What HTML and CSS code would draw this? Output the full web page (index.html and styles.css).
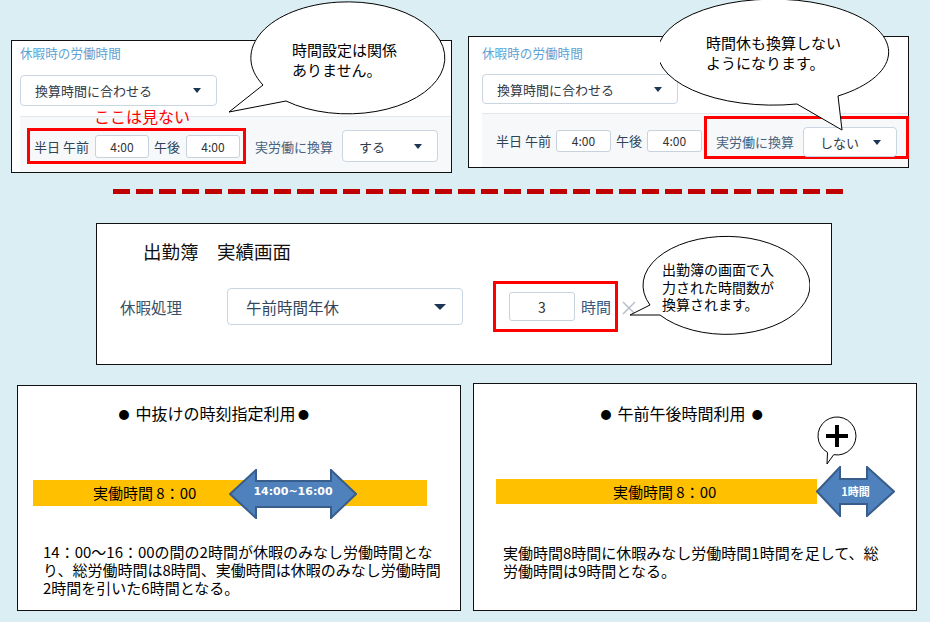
FILE: index.html
```html
<!DOCTYPE html>
<html lang="ja">
<head>
<meta charset="utf-8">
<title>休暇時の労働時間</title>
<link rel="stylesheet" href="styles.css">
</head>
<body>
  <div class="top-row">
    <section class="panel setting setting--a">
      <div class="setting__title">休暇時の労働時間</div>
      <div class="select setting__mode"><span>換算時間に合わせる</span><i class="caret"></i></div>
      <div class="setting__detail">
        <div class="mark mark--halfday">
          <span class="half-label">半日 午前</span>
          <span class="time">4:00</span>
          <span class="half-label half-label--pm">午後</span>
          <span class="time">4:00</span>
        </div>
        <span class="conv-label">実労働に換算</span>
        <div class="select conv-select"><span>する</span><i class="caret"></i></div>
      </div>
    </section>
    <section class="panel setting setting--b">
      <div class="setting__title">休暇時の労働時間</div>
      <div class="select setting__mode"><span>換算時間に合わせる</span><i class="caret"></i></div>
      <div class="setting__detail">
        <span class="half-label">半日 午前</span>
        <span class="time">4:00</span>
        <span class="half-label half-label--pm">午後</span>
        <span class="time">4:00</span>
        <div class="mark mark--conv">
          <span class="conv-label conv-label--in">実労働に換算</span>
          <div class="select conv-select conv-select--b"><span>しない</span><i class="caret"></i></div>
        </div>
      </div>
    </section>
  </div>

  <div class="divider"></div>

  <section class="panel record">
    <div class="record__title">出勤簿　実績画面</div>
    <div class="record__row">
      <span class="record__label">休暇処理</span>
      <div class="select record__select"><span>午前時間年休</span><i class="caret caret--lg"></i></div>
      <div class="mark mark--hours">
        <span class="hours-input">3</span>
        <span class="hours-unit">時間</span>
      </div>
      <svg class="clear-x" width="14" height="14" viewBox="0 0 14 14"><path d="M1 1 L13 13 M13 1 L1 13" stroke="#b3bcc6" stroke-width="1.4" fill="none"/></svg>
    </div>
  </section>

  <div class="bottom-row">
    <section class="panel case case--a">
      <div class="case__title"><span class="dot">●</span> 中抜けの時刻指定利用<span class="dot">●</span></div>
      <div class="bar bar--a">実働時間 8：00
        <div class="arrow arrow--a">
          <svg width="128" height="50" viewBox="-1 -1 128 50"><path d="M0,24 L26,0 L26,11 L101,11 L101,0 L126,24 L101,48 L101,37 L26,37 L26,48 Z" fill="#4f81bd" stroke="#385d8a" stroke-width="2" stroke-linejoin="miter"/></svg>
          <span class="arrow__label arrow__label--a">14:00~16:00</span>
        </div>
      </div>
      <p class="case__note case__note--a">14：00～16：00の間の2時間が休暇のみなし労働時間とな<br>り、総労働時間は8時間、実働時間は休暇のみなし労働時間<br>2時間を引いた6時間となる。</p>
    </section>
    <section class="panel case case--b">
      <div class="case__title"><span class="dot">●</span> 午前午後時間利用 <span class="dot">●</span></div>
      <div class="bar bar--b">実働時間 8：00
        <svg class="plus-bubble" width="42" height="52" viewBox="0 0 42 52"><path d="M11.5,37.45 L11,49 L17.7,39.7 A19,19 0 1 0 11.5,37.45 Z" fill="#fff" stroke="#000" stroke-width="1"/><path d="M10,21 H32 M21,10 V32" stroke="#000" stroke-width="4"/></svg>
        <div class="arrow arrow--b">
          <svg width="79" height="51" viewBox="-1 -1 79 51"><path d="M0,24.5 L23,0 L23,12 L50,12 L50,0 L77,24.5 L50,49 L50,37 L23,37 L23,49 Z" fill="#4f81bd" stroke="#385d8a" stroke-width="2"/></svg>
          <span class="arrow__label arrow__label--b">1時間</span>
        </div>
      </div>
      <p class="case__note case__note--b">実働時間8時間に休暇みなし労働時間1時間を足して、総<br>労働時間は9時間となる。</p>
    </section>
  </div>

  <div class="note-red">ここは見ない</div>

  <div class="bubble bubble--1">
    <svg width="226" height="118" viewBox="0 0 226 118"><path d="M38,85 L4,112 L61,101 A97,56 0 1 0 38,85 Z" fill="#fff" stroke="#000" stroke-width="1"/></svg>
    <p class="bubble__text bubble__text--1">時間設定は関係<br>ありません。</p>
  </div>
  <div class="bubble bubble--2">
    <svg width="236" height="138" viewBox="0 0 236 138"><path d="M137,108 L182,134 L178,100 A115.5,53 0 1 0 137,108 Z" fill="#fff" stroke="#000" stroke-width="1"/></svg>
    <p class="bubble__text bubble__text--2">時間休も換算しない<br>ようになります。</p>
  </div>
  <div class="bubble bubble--3">
    <svg width="182" height="104" viewBox="0 0 182 104"><path d="M22,72 L2,82 L32,82 A83.5,49 0 1 0 22,72 Z" fill="#fff" stroke="#000" stroke-width="1"/></svg>
    <p class="bubble__text bubble__text--3">出勤簿の画面で入<br>力された時間数が<br>換算されます。</p>
  </div>
</body>
</html>
```
FILE: styles.css
```css
* { box-sizing: border-box; }
html, body { margin: 0; padding: 0; }
body {
  width: 930px;
  height: 622px;
  background: #daeef3;
  font-family: "Noto Sans CJK JP", "Noto Sans", sans-serif;
  color: #000;
  position: relative;
  overflow: hidden;
}
p { margin: 0; }

.panel { background: #fff; border: 1px solid #111; }

/* top row */
.top-row { display: flex; align-items: flex-start; padding-left: 11px; }
.setting {
  width: 441px;
  padding-left: 8px;
  display: flex;
  flex-direction: column;
  align-items: flex-start;
}
.setting--a { margin-top: 40px; }
.setting--b { margin-top: 36px; margin-left: 16px; padding-left: 13px; }
.setting__title { font-size: 12.6px; line-height: 16px; color: #5ea2d3; margin-top: 4px; white-space: nowrap; }
.setting--b .setting__title { margin-top: 8px; }

.select {
  display: flex;
  align-items: center;
  justify-content: space-between;
  background: #fff;
  border: 1px solid #c9d5e1;
  border-radius: 4px;
  color: #2f3a46;
  white-space: nowrap;
}
.caret {
  display: block;
  width: 0;
  height: 0;
  border-left: 4.5px solid transparent;
  border-right: 4.5px solid transparent;
  border-top: 5px solid #1d3653;
}
.caret--lg { border-left-width: 6px; border-right-width: 6px; border-top-width: 6px; }

.setting__mode { width: 197px; height: 31px; margin-top: 14px; padding: 0 15px 0 14px; font-size: 13px; }
.setting--b .setting__mode { width: 196px; height: 30px; margin-top: 13px; }

.setting__detail {
  align-self: stretch;
  display: flex;
  align-items: center;
  background: #f6f8fa;
  border-top: 1px solid #e3e8ee;
}
.setting--a .setting__detail { height: 56px; margin-top: 10px; padding: 3px 0 0 7px; }
.setting--b .setting__detail { height: 54px; margin-top: 9px; padding-left: 14px; }

.mark { border: 3px solid #ff0000; display: flex; align-items: center; }
.mark--halfday { height: 36px; padding: 0 3px 0 4px; }
.half-label { font-size: 13px; color: #2f4358; white-space: nowrap; }
.half-label--pm { margin-left: 5px; }
.time {
  width: 54px;
  height: 23px;
  margin-left: 6px;
  border: 1px solid #c8d2dc;
  border-radius: 3px;
  background: #fff;
  font-size: 12px;
  color: #333;
  display: flex;
  align-items: center;
  justify-content: center;
}
.setting--b .time { width: 55px; height: 22px; margin-left: 5px; }
.setting--b .half-label--pm { margin-left: 5px; }

.conv-label { font-size: 13px; color: #46627e; margin-left: 9px; white-space: nowrap; }
.conv-select { width: 96px; height: 32px; margin-left: 9px; padding: 0 15px 0 16px; font-size: 13px; }

.mark--conv {
  align-self: flex-start;
  flex: 0 0 auto;
  width: 205px;
  height: 43px;
  margin: 2px -1px 0 auto;
  padding: 8px 9px 0 9px;
  align-items: flex-start;
}
.conv-label--in { margin-left: 0; line-height: 30px; }
.conv-select--b { height: 30px; width: 95px; }

/* divider */
.divider {
  margin: 16px 0 0 113px;
  width: 735px;
  height: 5px;
  background: repeating-linear-gradient(90deg, #c00000 0 17px, transparent 17px 23px);
}

/* record panel */
.record { width: 736px; height: 142px; margin: 29px 0 0 96px; }
.record__title { font-size: 18.5px; line-height: 24px; margin: 15px 0 0 46px; color: #111; white-space: nowrap; }
.record__row { display: flex; align-items: center; margin-top: 18px; padding-left: 23px; }
.record__label { width: 107px; font-size: 15.5px; color: #3a5168; white-space: nowrap; }
.record__select { width: 236px; height: 37px; padding: 0 16px 0 18px; font-size: 15.5px; color: #33475b; }
.mark--hours { height: 51px; margin-left: 30px; padding: 0 4px 0 13px; }
.hours-input {
  width: 66px;
  height: 29px;
  border: 1px solid #c9d3dc;
  border-radius: 3px;
  font-size: 14px;
  color: #333;
  display: flex;
  align-items: center;
  justify-content: center;
}
.hours-unit { margin-left: 6px; font-size: 15px; color: #34597d; white-space: nowrap; }
.clear-x { margin: 2px 0 0 4px; display: block; }

/* bottom cases */
.bottom-row { display: flex; align-items: flex-start; margin-top: 18px; }
.case { width: 444px; }
.case--a { height: 226px; margin: 2px 0 0 17px; }
.case--b { height: 228px; margin-left: 12px; }
.case__title { font-size: 16px; line-height: 20px; white-space: pre; }
.case--a .case__title { margin: 17px 0 0 98px; }
.case--b .case__title { margin: 19px 0 0 124px; }
.dot { display: inline-block; width: 16px; text-align: center; font-size: 11px; vertical-align: 1px; }

.bar { position: relative; background: #ffc000; font-size: 15px; white-space: nowrap; }
.bar--a { width: 394px; height: 26px; line-height: 26px; margin: 56px 0 0 15px; padding-left: 60px; }
.bar--b { width: 321px; height: 25px; line-height: 25px; margin: 55px 0 0 22px; padding-left: 117px; }

.arrow { position: absolute; }
.arrow svg { display: block; }
.arrow--a { left: 196px; top: -11px; }
.arrow--b { left: 320px; top: -13px; }
.arrow__label {
  position: absolute;
  inset: 0;
  display: flex;
  align-items: center;
  justify-content: center;
  color: #fff;
  font-weight: bold;
  font-size: 11px;
  line-height: 1;
}
.arrow__label--a { font-family: "DejaVu Sans", sans-serif; padding-bottom: 6px; }
.arrow__label--b { font-family: "Noto Sans CJK JP", sans-serif; }

.plus-bubble { position: absolute; left: 320px; top: -64px; display: block; }

.case__note { font-size: 15px; line-height: 18px; white-space: nowrap; }
.case__note--a { margin: 37px 0 0 25px; }
.case__note--b { margin: 40px 0 0 29px; }

/* annotations */
.note-red { position: absolute; left: 94px; top: 105px; color: #ff0000; font-size: 16px; line-height: 22px; white-space: nowrap; }

.bubble { position: absolute; }
.bubble svg { position: absolute; left: 0; top: 0; display: block; }
.bubble--1 { left: 225px; top: 0; width: 226px; height: 118px; }
.bubble--2 { left: 660px; top: -4px; width: 236px; height: 138px; }
.bubble--3 { left: 628px; top: 233px; width: 182px; height: 104px; }
.bubble__text { position: absolute; white-space: nowrap; color: #000; }
.bubble__text--1 { left: 67px; top: 40px; font-size: 15px; line-height: 20px; }
.bubble__text--2 { left: 46px; top: 37px; font-size: 15px; line-height: 20px; }
.bubble__text--3 { left: 34px; top: 28px; font-size: 14px; line-height: 17.5px; }
```
